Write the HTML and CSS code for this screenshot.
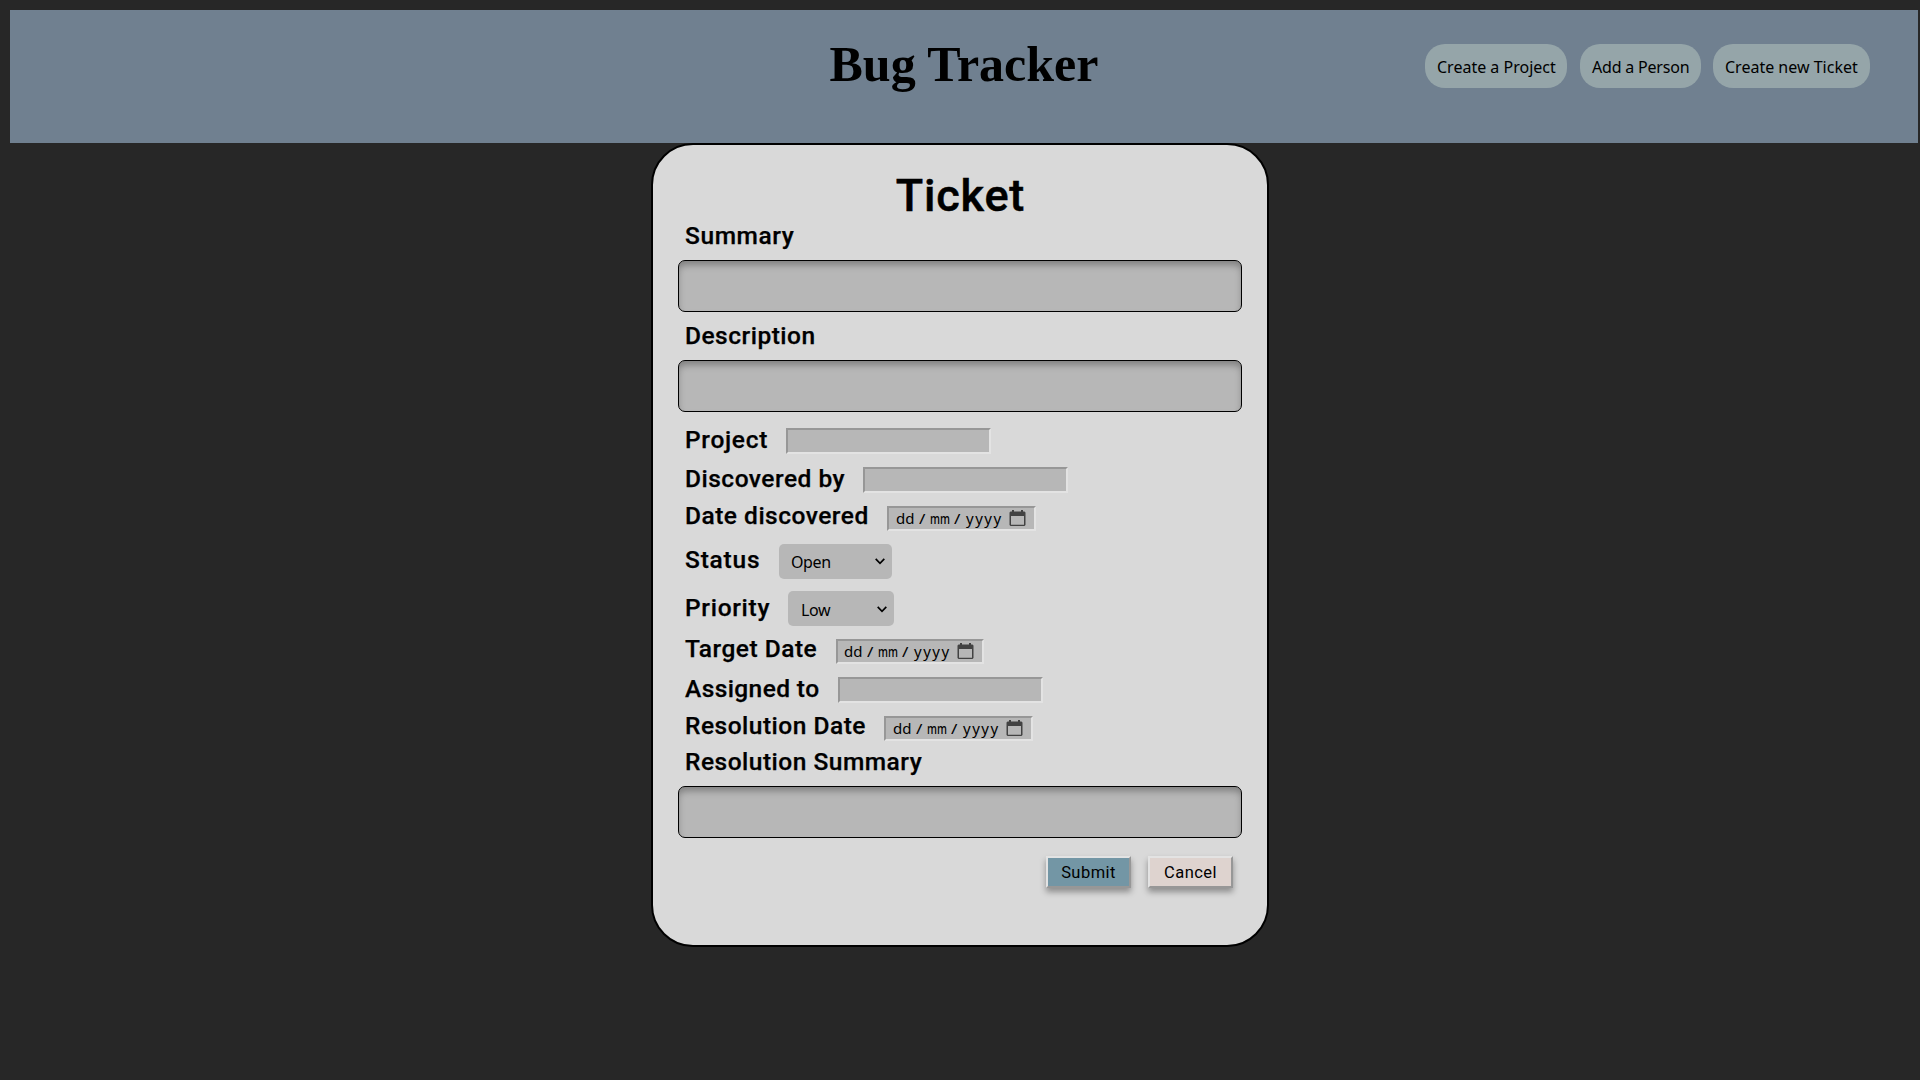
FILE: index.html
```
<!DOCTYPE html>
<html lang="en">
<head>
<meta charset="utf-8">
<title>Bug Tracker</title>
<link rel="stylesheet" href="styles.css">
</head>
<body>
<svg class="defs" aria-hidden="true">
  <symbol id="calendar" viewBox="0 0 17 17"><path fill="#424242" fill-rule="evenodd" d="M3 0h2v1.500h7V0h2v1.500h1.500l1 1V15l-1 1h-14l-1-1V2.500l1-1H3zM2 6v8.800h13V6z"/></symbol>
  <symbol id="chevron" viewBox="0 0 10 7"><path fill="none" stroke="#000" stroke-width="1.700" d="M.7.900 5 5.300 9.300.900"/></symbol>
</svg>
<header class="header">
  <h1 class="brand">Bug Tracker</h1>
  <nav class="nav">
    <a class="pill pill-project">Create a Project</a>
    <a class="pill pill-person">Add a Person</a>
    <a class="pill pill-ticket">Create new Ticket</a>
  </nav>
</header>
<main class="card">
  <h2 class="title">Ticket</h2>
  <label class="label l-summary">Summary</label>
  <input class="wide" type="text">
  <label class="label l-description">Description</label>
  <input class="wide" type="text">
  <div class="rows">
    <div class="row"><label class="label l-project">Project</label><input class="text" type="text"></div>
    <div class="row"><label class="label l-discovered">Discovered by</label><input class="text" type="text"></div>
    <div class="row row-date"><label class="label l-date">Date discovered</label><div class="date"><span class="dd">dd</span><span class="sl">/</span><span class="mm">mm</span><span class="sl">/</span><span class="yy">yyyy</span><svg class="cal"><use href="#calendar"/></svg></div></div>
    <div class="row row-status"><label class="label l-status">Status</label><div class="select select-status"><span>Open</span><svg class="chev"><use href="#chevron"/></svg></div></div>
    <div class="row row-priority"><label class="label l-priority">Priority</label><div class="select select-priority"><span>Low</span><svg class="chev"><use href="#chevron"/></svg></div></div>
    <div class="row row-date"><label class="label l-target">Target Date</label><div class="date date-target"><span class="dd">dd</span><span class="sl">/</span><span class="mm">mm</span><span class="sl">/</span><span class="yy">yyyy</span><svg class="cal"><use href="#calendar"/></svg></div></div>
    <div class="row"><label class="label l-assigned">Assigned to</label><input class="text" type="text"></div>
    <div class="row row-date"><label class="label l-resdate">Resolution Date</label><div class="date"><span class="dd">dd</span><span class="sl">/</span><span class="mm">mm</span><span class="sl">/</span><span class="yy">yyyy</span><svg class="cal"><use href="#calendar"/></svg></div></div>
  </div>
  <label class="label l-ressum">Resolution Summary</label>
  <input class="wide wide-last" type="text">
  <div class="actions">
    <button class="btn submit">Submit</button>
    <button class="btn cancel">Cancel</button>
  </div>
</main>
</body>
</html>
```
FILE: styles.css
```
* { box-sizing: border-box; }
body { margin: 0; padding: 10px 2px 0 10px; height: 1080px; background: #272727; color: #000; overflow: hidden; }
.defs { display: none; }
.header { height: 133px; background: #708090; display: grid; grid-template-columns: 1fr auto 1fr; }
.brand { grid-column: 2; margin: 25px 0 0; font: bold 50px/58px "Liberation Serif", serif; white-space: nowrap; }
.nav { grid-column: 3; justify-self: end; display: flex; margin: 34px 48px 0 0; }
.pill { height: 44px; border-radius: 20px; background: #95a5a9; padding-left: 12px; font: 16px/46px "Noto Sans", sans-serif; white-space: nowrap; }
.pill-project { width: 142px; margin-right: 13px; }
.pill-person { width: 121px; margin-right: 12px; letter-spacing: -0.2px; }
.pill-ticket { width: 157px; }

.card { width: 618px; height: 804px; margin: 0 0 0 641px; padding: 0 24px 0 25px; border: 2px solid #000; border-radius: 42px; background: #d9d9d9; display: flex; flex-direction: column; font-family: Roboto, sans-serif; }
.title { margin: 29px 0 0; height: 50px; font-weight: 500; font-size: 45px; line-height: 44px; text-align: center; letter-spacing: 0.8px; -webkit-text-stroke: 0.5px #000; }
.label { display: block; flex: none; padding-left: 7px; font-size: 24.5px; line-height: 24px; font-weight: 500; white-space: nowrap; letter-spacing: 0.5px; -webkit-text-stroke: 0.25px #000; }
.wide { flex: none; width: 564px; height: 52px; margin: 12px 0; border: 1px solid #000; border-radius: 7px; background: #b7b7b7; box-shadow: inset 0 5px 7px -1px rgba(0, 0, 0, 0.3); outline: 0; }
.rows { margin-top: 4px; }
.row { display: flex; align-items: flex-start; height: 39px; }
.row-date { height: 38px; }
.row-status { height: 47px; }
.row-priority { height: 48px; }
.row-date .label { margin-top: -2px; }
.row-status .label { margin-top: 4px; }
.row-priority .label { margin-top: 5px; }
.l-summary { letter-spacing: 0.6px; }
.l-project { width: 108px; letter-spacing: 0.7px; }
.l-discovered { width: 185px; }
.l-date { width: 209px; }
.l-status { width: 101px; letter-spacing: 0.8px; }
.l-priority { width: 110px; letter-spacing: 0.7px; }
.l-target { width: 158px; }
.l-assigned { width: 160px; letter-spacing: 0.4px; }
.l-resdate { width: 206px; }
.l-ressum { margin-top: -4px; }
.text, .date { border: 2px solid; border-color: #979797 #e3e3e3 #e3e3e3 #979797; background: #b7b7b7; }
.text { width: 205px; height: 26px; padding: 0; }
.date { width: 149px; height: 25px; padding-left: 7px; display: flex; font: 15px/21px "Noto Sans", sans-serif; white-space: nowrap; }
.date-target { width: 148px; padding-left: 6px; }
.dd { flex: none; width: 23px; }
.sl { flex: none; width: 11px; transform: scaleX(1.15); transform-origin: left; }
.sl:nth-child(4) { width: 12px; }
.mm { flex: none; width: 24px; font-weight: 500; transform: scaleX(0.7); transform-origin: left; }
.yy { flex: none; width: 43px; letter-spacing: 1.5px; }
.cal { flex: none; width: 17px; height: 17px; margin-top: 2px; }
.select { height: 35px; border-radius: 5px; background: #b7b7b7; padding: 0 7px 0 12px; display: flex; justify-content: space-between; font: 16px/37px "Noto Sans", sans-serif; letter-spacing: -0.4px; }
.select-status { width: 113px; }
.select-priority { width: 106px; padding-left: 13px; line-height: 38px; }
.chev { width: 10px; height: 7px; margin-top: 14px; }
.select-priority .chev { margin-top: 15px; }
.actions { display: flex; margin: 6px 0 0 368px; gap: 17px; }
.btn { width: 85px; height: 32px; padding: 2px 0 0; border: 2px solid; border-color: #e3e3e3 #979797 #979797 #e3e3e3; box-shadow: 0 4px 6px rgba(0, 0, 0, 0.35); color: #000; font: 16.5px/26px Roboto, sans-serif; letter-spacing: 0.45px; }
.submit { background: #7396a5; }
.cancel { background: #ded3cf; }
```
